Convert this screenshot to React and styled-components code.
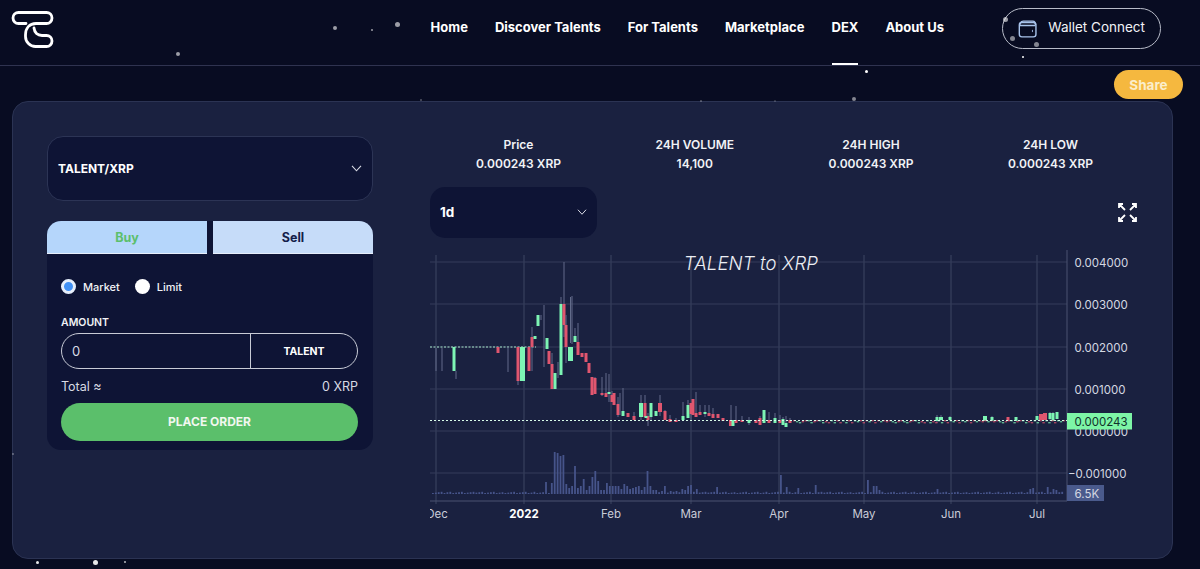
import styled, { createGlobalStyle } from "styled-components";

const GlobalStyle = createGlobalStyle`
  html, body {
    margin: 0;
    padding: 0;
    background: #080c22;
    overflow: hidden;
  }
  * { box-sizing: border-box; }
`;

const STARS = [
  [333, 26, 4, 0.6], [371, 29, 2, 0.6], [395, 22, 5, 0.6], [176, 52, 4, 0.6],
  [865, 70, 3, 1], [1022, 56, 2, 1], [852, 97, 4, 0.5], [1003, 17, 5, 0.6],
  [1010, 36, 5, 0.5], [1034, 42, 5, 0.5], [12, 453, 2, 0.35], [36, 561, 3, 0.9],
  [93, 560, 5, 0.9], [124, 561, 2, 0.7], [420, 99, 2, 0.3], [700, 100, 2, 0.3],
  [774, 100, 2, 0.2],
];

// page coordinates, read off the reference: x, wick top, wick bottom, body top, body bottom, colour, body width
const G = "#7df5b4";
const R = "#e0566f";
const CANDLES = [
  [436, 348, 371], [442, 348, 371],
  [454, 347, 371, 347, 371, G], [456, 371, 379],
  [498, 347, 353, 347, 353, R], [508, 347, 372],
  [518, 347, 385, 347, 381, R, 3], [522.5, 347, 381, 347, 381, G, 5],
  [529, 347, 371, 347, 371, R], [532, 327, 371, 337, 347, R],
  [535, 336, 339, 336, 339, G], [538, 315, 326, 315, 326, G],
  [541, 315, 320], [544, 305, 367], [547, 338, 349, 338, 349, G],
  [549, 351, 364, 351, 364, R], [552, 353, 389, 364, 389, R],
  [555, 373, 389, 373, 389, G], [558, 362, 378], [561, 297, 375, 304, 375, G],
  [564, 262, 337, 304, 325, R], [566, 315, 363, 325, 347, R],
  [570.5, 297, 343, 347, 361, G, 5], [572, 296, 344], [575, 328, 342, 336, 342, G],
  [578, 323, 355, 342, 355, R], [582, 353, 357, 353, 357, R], [586, 353, 362, 353, 362, R],
  [589, 363, 373, 363, 373, R], [592, 377, 395, 377, 395, R], [595, 377, 394, 378, 394, R],
  [602, 377, 396, 393, 395, R], [606, 373, 397, 393, 397, R], [609, 374, 402, 392, 394, G],
  [612, 391, 402, 395, 402, R], [614, 393, 405, 393, 405, R], [618, 397, 417, 404, 415, R],
  [620, 393, 415], [623, 388, 416, 411, 416, G], [628, 413, 417, 413, 417, R],
  [634, 412, 420, 416, 420, R], [641, 395, 420, 403, 417, G, 4], [645, 395, 416, 403, 417, R],
  [648, 413, 426, 416, 420, R], [651, 403, 420, 403, 417, G], [646, 416, 418, 416, 418, G],
  [656, 411, 416, 411, 416, G], [660, 395, 416, 403, 412, R, 4], [665, 410, 420, 411, 420, R],
  [670, 415, 422, 419, 422, R], [676, 418, 422, 420, 422, R], [683, 402, 420, 416, 420, G],
  [688, 400, 418, 405, 418, G], [691, 410, 420, 403, 414, R], [693, 399, 415, 399, 415, R],
  [696, 392, 417, 413, 417, R], [700, 405, 415, 412, 415, R], [705, 405, 417, 412, 414, G],
  [709, 405, 416, 413, 416, R], [713, 408, 418, 414, 418, R], [718, 414, 418, 414, 418, R],
  [723, 418, 421, 418, 421, R], [731, 405, 426, 420, 426, R, 4], [733, 420, 426, 420, 426, G],
  [736, 406, 420, 420, 423, R], [742, 416, 422, 420, 422, R], [749, 417, 425, 420, 423, G],
  [756, 420, 423, 420, 423, R], [760, 416, 425, 418, 425, R], [764, 410, 423, 410, 423, G],
  [769, 412, 423, 420, 423, R], [775, 413, 423, 418, 423, G], [780, 415, 423, 420, 423, R],
  [783, 417, 425, 419, 425, G], [786, 416, 427, 423, 427, G], [790, 418, 423, 420, 423, R],
  [937, 415, 423, 417, 421, G], [941, 415, 420, 417, 420, G, 4], [950, 416, 420, 417, 420, G],
  [985, 416, 421, 416, 421, G, 4], [992, 416, 421, 417, 421, G], [1008, 417, 421, 417, 421, R],
  [1016, 417, 421, 417, 421, G], [1037, 416, 420, 416, 420, G], [1041, 414, 420, 414, 420, R, 4],
  [1045, 413, 420, 413, 420, R, 4], [1050, 412, 421, 413, 419, G], [1053, 412, 421, 413, 421, G],
  [1057, 412, 419, 412, 419, G],
];

// the quiet months: little dashes round the last price
const quietCandles = () => {
  const marks = [];
  for (let x = 793; x < 1064; x += 2.9) {
    const n = Math.round(x * 3) % 7;
    marks.push([x, 420 + (n % 3), n < 3 ? G : R]);
  }
  return marks;
};

// volume heights for the busy stretch, the rest comes from a small repeating pattern
const VOLUMES = {
  545: 12, 551: 11, 554: 42, 557: 41, 560: 38, 563: 39, 566: 10, 569: 6, 572: 8, 575: 28,
  578: 6, 580: 8, 583: 15, 586: 4, 590: 8, 592: 17, 595: 23, 598: 13, 601: 4, 603: 4,
  606: 11, 609: 8, 612: 8, 615: 8, 618: 8, 620: 5, 623: 10, 626: 8, 628: 5, 632: 6, 634: 7,
  637: 8, 640: 4, 643: 7, 646: 23, 649: 8, 652: 4, 655: 4, 660: 3, 664: 8,
  670: 3, 675: 3, 680: 5, 684: 4, 688: 8, 691: 9, 695: 5, 716: 7, 781: 19, 785: 7,
  796: 6, 815: 9, 866: 14, 872: 8, 875: 8, 880: 4, 937: 5, 1029: 5, 1033: 6, 1048: 7, 1052: 5, 1056: 4,
};
const GRID_X = [436, 524, 611, 691, 779, 864, 951, 1037];
const GRID_Y = [262, 304, 347, 389, 431, 473];
const PRICE_TICKS = [
  [262, "0.004000"], [304, "0.003000"], [347, "0.002000"], [389, "0.001000"], [431, "0.000000"], [473, "−0.001000"],
];
const MONTHS = [
  [524, "2022", true], [611, "Feb"], [691, "Mar"], [779, "Apr"], [864, "May"], [951, "Jun"], [1037, "Jul"],
];

const volumeBars = () => {
  const bars = [];
  for (let x = 432; x < 1064; x += 2.9) {
    const key = Object.keys(VOLUMES).find((k) => Math.abs(k - x) < 1.45);
    const h = key ? VOLUMES[key] : 1 + ((Math.round(x) * 7) % 4) * 0.4;
    bars.push([x, h]);
  }
  return bars;
};

const Chart = () => (
  <ChartSvg viewBox="430 250 710 280">
    <defs>
      <clipPath id="plot">
        <rect x="430" y="250" width="637" height="251" />
      </clipPath>
      <clipPath id="axis-labels">
        <rect x="430" y="505" width="640" height="20" />
      </clipPath>
    </defs>
    {GRID_X.map((x) => (
      <line key={x} x1={x} x2={x} y1="255" y2="504" stroke="#3d4663" />
    ))}
    {GRID_Y.map((y) => (
      <line key={y} x1="430" x2="1067" y1={y} y2={y} stroke="#343c5a" />
    ))}
    <line x1="430" x2="1067" y1="501" y2="501" stroke="#4a5270" />
    <line x1="1067" x2="1067" y1="250" y2="501" stroke="#4a5270" />
    <g clipPath="url(#plot)">
      {volumeBars().map(([x, h]) => (
        <rect key={x} x={x} y={494 - h} width="1.8" height={h} fill="#46548a" />
      ))}
      <line x1="430" x2="536" y1="347" y2="347" stroke="#a9e8cc" strokeDasharray="2 1.5" />
      {CANDLES.map(([x, top, bottom, bodyTop, bodyBottom, colour, width = 3], i) => (
        <g key={i}>
          <line x1={x} x2={x} y1={top} y2={bottom} stroke="#626b8a" />
          {colour && (
            <rect x={x - width / 2} y={bodyTop} width={width} height={bodyBottom - bodyTop} fill={colour} />
          )}
        </g>
      ))}
      {quietCandles().map(([x, y, colour]) => (
        <rect key={x} x={x} y={y} width="2.4" height="1.4" fill={colour} opacity="0.7" />
      ))}
      <line x1="430" x2="1067" y1="420.5" y2="420.5" stroke="#d8fbe8" strokeDasharray="2 2" />
    </g>
    <text x="751" y="270" textAnchor="middle" fill="#eceef4" fontFamily="Inter, sans-serif" fontSize="18.5" fontWeight="300" fontStyle="italic" letterSpacing="0.15">
      TALENT to XRP
    </text>
    {PRICE_TICKS.map(([y, label]) => (
      <text key={y} x={label.startsWith("−") ? 1068 : 1074.5} y={y + 4.5} fill="#d5d8e2" fontFamily="Inter, sans-serif" fontSize="11.5">
        {label}
      </text>
    ))}
    <rect x="1067" y="413" width="65" height="16.5" fill="#7df5a6" />
    <text x="1074.5" y="426" fill="#10302a" fontFamily="Inter, sans-serif" fontSize="11.5">0.000243</text>
    <rect x="1067" y="485" width="37" height="16" fill="#4a5a8c" />
    <text x="1074.5" y="497.5" fill="#d5d8e2" fontFamily="Inter, sans-serif" fontSize="11.5">6.5K</text>
    <g clipPath="url(#axis-labels)">
      <text x="437" y="518" textAnchor="middle" fill="#c9ccd8" fontFamily="Inter, sans-serif" fontSize="11.5">Dec</text>
    </g>
    {MONTHS.map(([x, label, strong]) => (
      <text key={x} x={x} y="518" textAnchor="middle" fill={strong ? "#fff" : "#c9ccd8"} fontFamily="Inter, sans-serif" fontSize="11.5" fontWeight={strong ? 700 : 400}>
        {label}
      </text>
    ))}
  </ChartSvg>
);

const Logo = () => (
  <LogoSvg width="60" height="60" viewBox="0 0 60 60" fill="none">
    <path
      d="M26 23.5H18.5A5.5 5.5 0 0 1 18.5 12.5H46.5A5.5 5.5 0 0 1 46.5 23.5H36C29.5 23.5 25.5 28 25.5 35V36.5A10 10 0 0 0 35.5 46.5H46.5A5.5 5.5 0 0 0 46.5 35.5H42C37.5 35.5 34.5 32.5 34 28"
      stroke="#fff"
      strokeWidth="2.8"
      strokeLinecap="round"
    />
  </LogoSvg>
);

const WalletIcon = () => (
  <svg width="22" height="22" viewBox="0 0 22 22" fill="none" stroke="#a9c4ec" strokeWidth="1.6">
    <rect x="1.5" y="3.5" width="19" height="16.5" rx="3" />
    <path d="M2 7.5C2 5 3 2 6 2H17C19 2 20 4 20 6.5M2 7H20" />
    <path d="M16.5 12V14.5" strokeWidth="1" />
  </svg>
);

const Chevron = ({ size = 11 }) => (
  <svg width={size} height={size * 0.6} viewBox="0 0 11 6.6" fill="none" stroke="#d8dae4" strokeWidth="1.1">
    <path d="M1 .8L5.5 5.8L10 .8" />
  </svg>
);

const ExpandIcon = () => (
  <svg width="19" height="19" viewBox="0 0 19 19" fill="none" stroke="#fff" strokeWidth="1.8">
    <path d="M1 5V1H5M1 1L7 7M18 5V1H14M18 1L12 7M1 14V18H5M1 18L7 12M18 14V18H14M18 18L12 12" />
  </svg>
);

const Stat = ({ label, value }) => (
  <StatBox>
    <div>{label}</div>
    <div>{value}</div>
  </StatBox>
);

export default function App() {
  return (
    <Page>
      <GlobalStyle />
      {STARS.map(([x, y, size, opacity]) => (
        <Star key={`${x}-${y}`} style={{ left: x, top: y, width: size, height: size, opacity }} />
      ))}
      <Header>
        <Logo />
        <Nav>
          <NavLink>Home</NavLink>
          <NavLink>Discover Talents</NavLink>
          <NavLink>For Talents</NavLink>
          <NavLink>Marketplace</NavLink>
          <NavLink $active>DEX</NavLink>
          <NavLink>About Us</NavLink>
        </Nav>
        <WalletButton>
          <WalletIcon />
          <WalletLabel>Wallet Connect</WalletLabel>
        </WalletButton>
      </Header>
      <ShareRow>
        <ShareButton>Share</ShareButton>
      </ShareRow>
      <Panel>
        <LeftColumn>
          <PairSelect>
            TALENT/XRP
            <Chevron />
          </PairSelect>
          <OrderCard>
            <Tabs>
              <Tab $buy>Buy</Tab>
              <Tab>Sell</Tab>
            </Tabs>
            <OrderBody>
              <RadioRow>
                <RadioLabel>
                  <Radio $checked />
                  Market
                </RadioLabel>
                <RadioLabel>
                  <Radio />
                  Limit
                </RadioLabel>
              </RadioRow>
              <AmountLabel>AMOUNT</AmountLabel>
              <AmountField>
                <AmountValue>0</AmountValue>
                <AmountUnit>TALENT</AmountUnit>
              </AmountField>
              <TotalRow>
                <span>Total ≈</span>
                <span>0 XRP</span>
              </TotalRow>
              <PlaceOrder>PLACE ORDER</PlaceOrder>
            </OrderBody>
          </OrderCard>
        </LeftColumn>
        <RightColumn>
          <Stats>
            <Stat label="Price" value="0.000243 XRP" />
            <Stat label="24H VOLUME" value="14,100" />
            <Stat label="24H HIGH" value="0.000243 XRP" />
            <Stat label="24H LOW" value="0.000243 XRP" />
          </Stats>
          <ChartBar>
            <IntervalSelect>
              1d
              <Chevron size={10} />
            </IntervalSelect>
            <ExpandIcon />
          </ChartBar>
          <Chart />
        </RightColumn>
      </Panel>
    </Page>
  );
}

const Page = styled.div`
  position: relative;
  width: 1200px;
  height: 569px;
  overflow: hidden;
  background: #080c22;
  color: #fff;
  font-family: Inter, "Noto Sans", sans-serif;
`;

const Star = styled.span`
  position: absolute;
  z-index: 3;
  border-radius: 50%;
  background: #fff;
`;

const Header = styled.header`
  display: flex;
  align-items: flex-start;
  height: 66px;
  padding-right: 39px;
  border-bottom: 1px solid #2f3350;
`;

const LogoSvg = styled.svg`
  flex: none;
`;

const Nav = styled.nav`
  display: flex;
  gap: 27px;
  margin-left: auto;
  margin-right: 58px;
  height: 66px;
`;

const NavLink = styled.a`
  position: relative;
  display: flex;
  align-items: center;
  padding-bottom: 13px;
  font-size: 13px;
  font-weight: 700;
  white-space: nowrap;
  &::after {
    content: "";
    display: ${({ $active }) => ($active ? "block" : "none")};
    position: absolute;
    left: 0;
    right: 0;
    bottom: 1px;
    height: 2.5px;
    background: #fff;
  }
`;

const WalletButton = styled.button`
  display: flex;
  align-items: center;
  gap: 11px;
  width: 159px;
  height: 41px;
  margin-top: 8px;
  padding: 0 15px;
  border: 1px solid #b8bcc9;
  border-radius: 21px;
  background: transparent;
  color: #f1f2f6;
  font-family: inherit;
  font-size: 13.5px;
  white-space: nowrap;
`;

const WalletLabel = styled.span`
  margin-bottom: 3px;
`;

const ShareRow = styled.div`
  display: flex;
  justify-content: flex-end;
  height: 35px;
  padding: 4px 17px 0 0;
`;

const ShareButton = styled.button`
  position: relative;
  z-index: 2;
  width: 69px;
  height: 29px;
  border: none;
  border-radius: 15px;
  background: #f5b83f;
  color: #fbeecb;
  font-family: inherit;
  font-size: 13.5px;
  font-weight: 700;
`;

const Panel = styled.main`
  display: flex;
  gap: 57px;
  width: 1161px;
  height: 458px;
  margin-left: 12px;
  padding: 34px 36px 0 34px;
  border: 1px solid #2b3353;
  border-radius: 16px;
  background: #1a2140;
`;

const LeftColumn = styled.section`
  display: flex;
  flex-direction: column;
  gap: 20px;
  flex: 0 0 326px;
`;

const PairSelect = styled.div`
  display: flex;
  align-items: center;
  justify-content: space-between;
  height: 65px;
  padding: 0 10px;
  border: 1px solid #2c3455;
  border-radius: 16px;
  background: #0e1435;
  font-size: 12px;
  font-weight: 700;
`;

const OrderCard = styled.div`
  height: 229px;
  border-radius: 14px;
  background: #0e1435;
  overflow: hidden;
`;

const Tabs = styled.div`
  display: flex;
  gap: 6px;
  height: 33px;
`;

const Tab = styled.div`
  flex: 1;
  display: flex;
  align-items: center;
  justify-content: center;
  border-bottom: 1px solid #e6eefb;
  background: ${({ $buy }) => ($buy ? "#b5d6fb" : "#c6dcf9")};
  color: ${({ $buy }) => ($buy ? "#5cbf6c" : "#14204a")};
  font-size: 12.5px;
  font-weight: 700;
`;

const OrderBody = styled.div`
  padding: 25px 15px 0 14px;
`;

const RadioRow = styled.div`
  display: flex;
  gap: 15px;
  height: 15px;
`;

const RadioLabel = styled.label`
  display: flex;
  align-items: center;
  gap: 7px;
  font-size: 11px;
  font-weight: 500;
  color: #f1f2f6;
`;

const Radio = styled.span`
  width: 15px;
  height: 15px;
  border-radius: 50%;
  background: ${({ $checked }) => ($checked ? "#4291f5" : "#fff")};
  border: ${({ $checked }) => ($checked ? "3px solid #e6eefb" : "none")};
`;

const AmountLabel = styled.div`
  margin-top: 22px;
  font-size: 10.5px;
  font-weight: 600;
  color: #f1f2f6;
`;

const AmountField = styled.div`
  display: flex;
  height: 36px;
  margin-top: 4px;
  border: 1px solid #c8cbd6;
  border-radius: 18px;
  overflow: hidden;
`;

const AmountValue = styled.div`
  flex: 0 0 189px;
  display: flex;
  align-items: center;
  padding-left: 10px;
  border-right: 1px solid #c8cbd6;
  font-size: 13px;
  color: #d8dae4;
`;

const AmountUnit = styled.div`
  flex: 1;
  display: flex;
  align-items: center;
  justify-content: center;
  font-size: 10.5px;
  font-weight: 700;
`;

const TotalRow = styled.div`
  display: flex;
  justify-content: space-between;
  margin-top: 10px;
  font-size: 12.5px;
  color: #d8dae4;
`;

const PlaceOrder = styled.button`
  display: block;
  width: 297px;
  height: 38px;
  margin-top: 9px;
  padding-bottom: 3px;
  border: none;
  border-radius: 19px;
  background: #5bbf6b;
  color: #f1f7ef;
  font-family: inherit;
  font-size: 12px;
  font-weight: 700;
`;

const RightColumn = styled.section`
  flex: 1;
  min-width: 0;
`;

const Stats = styled.div`
  display: flex;
  justify-content: space-between;
  width: 663px;
  padding-left: 46px;
`;

const StatBox = styled.div`
  display: flex;
  flex-direction: column;
  align-items: center;
  font-size: 12px;
  font-weight: 600;
  line-height: 18.5px;
  white-space: nowrap;
  color: #f1f2f6;
`;

const ChartBar = styled.div`
  display: flex;
  align-items: center;
  justify-content: space-between;
  width: 707px;
  margin-top: 14px;
`;

const IntervalSelect = styled.div`
  display: flex;
  align-items: center;
  justify-content: space-between;
  width: 167px;
  height: 51px;
  padding: 0 10px 2px;
  border-radius: 15px;
  background: #0e1435;
  font-size: 13.5px;
  font-weight: 700;
`;

const ChartSvg = styled.svg`
  display: block;
  width: 710px;
  height: 280px;
  margin-top: 12px;
  overflow: visible;
`;
